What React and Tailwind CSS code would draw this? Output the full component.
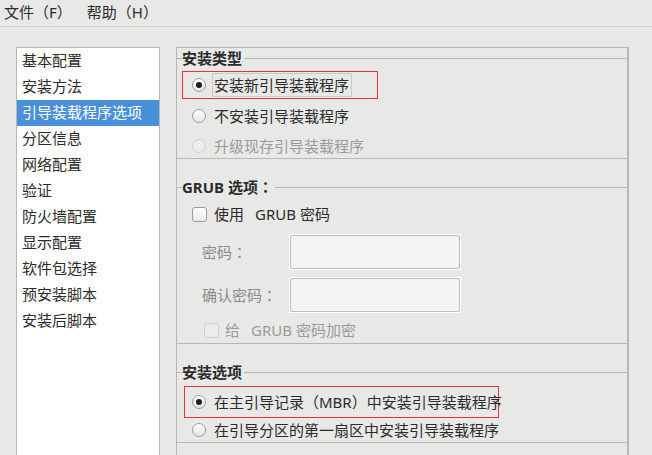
const FONT = { fontFamily: '"Noto Sans", "Noto Sans CJK SC", sans-serif' };
const TC = { fontFamily: '"Noto Sans CJK TC", sans-serif' };

const Radio = ({ checked, disabled }) => (
  <span
    className={`flex h-[14px] w-[14px] shrink-0 items-center justify-center rounded-full border ${
      disabled
        ? "border-[#cdcdcd] bg-[#ececec]"
        : "border-[#9c9c9c] bg-gradient-to-b from-white to-[#e4e4e4]"
    }`}
  >
    {checked && <span className="h-[6px] w-[6px] rounded-full bg-[#1c1c1c]" />}
  </span>
);

const Checkbox = ({ disabled }) => (
  <span
    className={`block h-[15px] w-[15px] shrink-0 rounded-[3px] border ${
      disabled
        ? "border-[#cfcfcf] bg-[#ececec]"
        : "border-[#9c9c9c] bg-gradient-to-b from-white to-[#e8e8e8]"
    }`}
  />
);

const Frame = ({ label, height, children }) => (
  <div className={`relative box-border border-y border-[#b6b6b6] ${height}`}>
    <span className="absolute left-[5px] top-[-11px] bg-[#e8e8e7] pr-[2px] text-[15px] font-bold leading-[20px] text-[#2b2b2b]">
      {label}
    </span>
    {children}
  </div>
);

const Field = ({ label }) => (
  <div className="flex h-[36px] items-center">
    <span className="ml-[25px] w-[87px] text-[#8a8a8a]">
      {label}
      <span style={TC}>：</span>
    </span>
    <div className="h-[36px] w-[172px] border border-white">
      <div className="h-full w-full rounded-[3px] border border-[#bdbdbd] bg-[#f3f3f3]" />
    </div>
  </div>
);

const items = [
  "基本配置",
  "安装方法",
  "引导装载程序选项",
  "分区信息",
  "网络配置",
  "验证",
  "防火墙配置",
  "显示配置",
  "软件包选择",
  "预安装脚本",
  "安装后脚本",
];

export default function App() {
  return (
    <div
      className="h-[455px] w-[652px] overflow-hidden bg-[#e8e8e7] text-[15px] text-[#2b2b2b]"
      style={FONT}
    >
      {/* Menu bar */}
      <div className="flex h-[27px] items-center border-b border-[#d0d0d0] pl-[4px] pb-[1px]">
        <span>文件（F）</span>
        <span className="ml-[15px]">帮助（H）</span>
      </div>

      <div className="flex pt-[20px]">
        {/* Sidebar list */}
        <div className="ml-[16px] h-[420px] w-[144px] border border-[#b8b8b8] bg-white">
          {items.map((item) => (
            <div
              key={item}
              className={`flex h-[26px] items-center pb-[2px] pl-[5px] ${
                item === "引导装载程序选项" ? "bg-[#4a90d9] text-white" : ""
              }`}
            >
              {item}
            </div>
          ))}
        </div>

        {/* Options panel */}
        <div className="ml-[16px] box-border flex h-[420px] w-[453px] flex-col border-l border-t border-r-2 border-[#b6b6b6] pt-[10px]">
          <Frame label="安装类型" height="h-[101px]">
            <div className="pt-[12px]">
              <div className="ml-[5px] flex h-[28px] w-[196px] items-center border border-[#e53535] pl-[9px]">
                <Radio checked />
                <span className="ml-[6px] flex h-[24px] w-[140px] items-center rounded-[2px] border border-[#c9c9c9] px-[1px]">
                  安装新引导装载程序
                </span>
              </div>
              <div className="mt-[2px] flex h-[30px] items-center pl-[15px]">
                <Radio />
                <span className="ml-[8px]">不安装引导装载程序</span>
              </div>
              <div className="flex h-[30px] items-center pl-[15px]">
                <Radio disabled />
                <span className="ml-[8px] text-[#9a9a9a]">升级现存引导装载程序</span>
              </div>
            </div>
          </Frame>

          <div className="mt-[28px]">
            <Frame
              label={
                <>
                  GRUB 选项<span style={TC}>：</span>
                </>
              }
              height="h-[157px]"
            >
              <div className="pt-[13px]">
                <div className="flex h-[26px] items-center pl-[15px]">
                  <Checkbox />
                  <span className="ml-[7px]">使用</span>
                  <span className="ml-[11px]">GRUB</span>
                  <span className="ml-[4px]">密码</span>
                </div>
                <div className="mt-[7px]">
                  <Field label="密码" />
                </div>
                <div className="mt-[7px]">
                  <Field label="确认密码" />
                </div>
                <div className="mt-[2px] flex h-[30px] items-center pl-[27px] text-[#9a9a9a]">
                  <Checkbox disabled />
                  <span className="ml-[6px]">给</span>
                  <span className="ml-[11px]">GRUB</span>
                  <span className="ml-[4px]">密码加密</span>
                </div>
              </div>
            </Frame>
          </div>

          <div className="mt-[28px]">
            <Frame label="安装选项" height="h-[71px]">
              <div className="pt-[13px]">
                <div className="ml-[7px] flex h-[32px] w-[315px] items-center border border-[#e53535] pl-[7px]">
                  <Radio checked />
                  <span className="ml-[8px] whitespace-nowrap">在主引导记录（MBR）中安装引导装载程序</span>
                </div>
                <div className="flex h-[24px] items-center pl-[15px]">
                  <Radio />
                  <span className="ml-[8px] whitespace-nowrap">在引导分区的第一扇区中安装引导装载程序</span>
                </div>
              </div>
            </Frame>
          </div>
        </div>
      </div>
    </div>
  );
}
